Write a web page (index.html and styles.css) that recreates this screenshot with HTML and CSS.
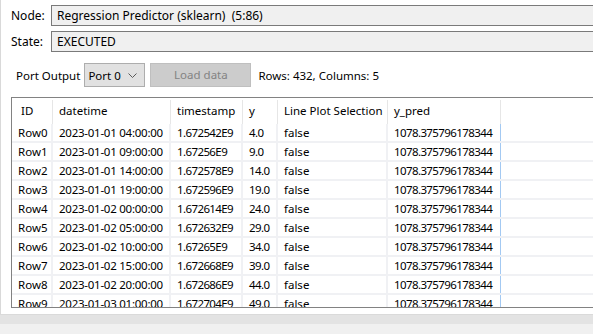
FILE: index.html
```html
<!DOCTYPE html>
<html>
<head>
<meta charset="utf-8">
<link rel="stylesheet" href="styles.css">
</head>
<body>
<div class="panel">
  <div class="field-row first">
    <span class="label">Node:</span>
    <div class="field">Regression Predictor (sklearn)&nbsp; (5:86)</div>
  </div>
  <div class="field-row">
    <span class="label">State:</span>
    <div class="field">EXECUTED</div>
  </div>
  <div class="port-row">
    <span class="port-label">Port Output</span>
    <div class="select">
      <span>Port 0</span>
      <svg class="chev" width="9" height="5" viewBox="0 0 9 5"><path d="M0.5 0.5 L4.5 4.5 L8.5 0.5" fill="none" stroke="#5a5a5a" stroke-width="1"/></svg>
    </div>
    <div class="btn">Load data</div>
    <span class="info">Rows: 432, Columns: 5</span>
  </div>
  <div class="table">
    <div class="row head">
      <div class="c id">ID</div>
      <div class="c">datetime</div>
      <div class="c">timestamp</div>
      <div class="c">y</div>
      <div class="c">Line Plot Selection</div>
      <div class="c">y_pred</div>
      <div class="c last"></div>
    </div>
    <div class="row"><div class="c id">Row0</div><div class="c dt">2023-01-01 04:00:00</div><div class="c n">1.672542E9</div><div class="c n">4.0</div><div class="c">false</div><div class="c n pred">1078.375796178344</div><div class="c last"></div></div>
    <div class="row"><div class="c id">Row1</div><div class="c dt">2023-01-01 09:00:00</div><div class="c n">1.67256E9</div><div class="c n">9.0</div><div class="c">false</div><div class="c n pred">1078.375796178344</div><div class="c last"></div></div>
    <div class="row"><div class="c id">Row2</div><div class="c dt">2023-01-01 14:00:00</div><div class="c n">1.672578E9</div><div class="c n">14.0</div><div class="c">false</div><div class="c n pred">1078.375796178344</div><div class="c last"></div></div>
    <div class="row"><div class="c id">Row3</div><div class="c dt">2023-01-01 19:00:00</div><div class="c n">1.672596E9</div><div class="c n">19.0</div><div class="c">false</div><div class="c n pred">1078.375796178344</div><div class="c last"></div></div>
    <div class="row"><div class="c id">Row4</div><div class="c dt">2023-01-02 00:00:00</div><div class="c n">1.672614E9</div><div class="c n">24.0</div><div class="c">false</div><div class="c n pred">1078.375796178344</div><div class="c last"></div></div>
    <div class="row"><div class="c id">Row5</div><div class="c dt">2023-01-02 05:00:00</div><div class="c n">1.672632E9</div><div class="c n">29.0</div><div class="c">false</div><div class="c n pred">1078.375796178344</div><div class="c last"></div></div>
    <div class="row"><div class="c id">Row6</div><div class="c dt">2023-01-02 10:00:00</div><div class="c n">1.67265E9</div><div class="c n">34.0</div><div class="c">false</div><div class="c n pred">1078.375796178344</div><div class="c last"></div></div>
    <div class="row"><div class="c id">Row7</div><div class="c dt">2023-01-02 15:00:00</div><div class="c n">1.672668E9</div><div class="c n">39.0</div><div class="c">false</div><div class="c n pred">1078.375796178344</div><div class="c last"></div></div>
    <div class="row"><div class="c id">Row8</div><div class="c dt">2023-01-02 20:00:00</div><div class="c n">1.672686E9</div><div class="c n">44.0</div><div class="c">false</div><div class="c n pred">1078.375796178344</div><div class="c last"></div></div>
    <div class="row"><div class="c id">Row9</div><div class="c dt">2023-01-03 01:00:00</div><div class="c n">1.672704E9</div><div class="c n">49.0</div><div class="c">false</div><div class="c n pred">1078.375796178344</div><div class="c last"></div></div>
  </div>
</div>
<div class="bottom-band"></div>
</body>
</html>
```
FILE: styles.css
```css
html, body {
  margin: 0;
  padding: 0;
}
body {
  background: #f0f0f0;
  font-family: "Noto Sans", "Open Sans", sans-serif;
  font-size: 12px;
  color: #000;
  width: 593px;
  height: 334px;
  overflow: hidden;
}
.panel {
  background: #ffffff;
  border-left: 1px solid #d9d9d9;
  border-bottom: 1px solid #dadada;
  height: 315px;
  overflow: hidden;
  box-sizing: border-box;
  padding-top: 5px;
}
.bottom-band {
  height: 9px;
  background: #e3e3e3;
}
.field-row {
  display: flex;
  align-items: center;
  height: 21px;
  margin-bottom: 5px;
  padding-left: 10px;
}
.label {
  width: 40px;
  line-height: 21px;
}
.field {
  flex: 1;
  height: 19px;
  line-height: 19px;
  background: #f0f0f0;
  border: 1px solid #7a7a7a;
  border-right: none;
  padding-left: 5px;
  white-space: nowrap;
}
.port-row {
  display: flex;
  align-items: center;
  height: 24px;
  margin-top: 11px;
  padding-left: 15px;
  font-size: 11.5px;
}
.port-label {
  margin-right: 4px;
}
.select {
  width: 56px;
  height: 22px;
  background: #e1e1e1;
  border: 1px solid #adadad;
  display: flex;
  align-items: center;
  padding-left: 3px;
  margin-right: 5px;
}
.select span {
  flex: 1;
}
.chev {
  margin-right: 7px;
}
.btn {
  width: 99px;
  height: 22px;
  line-height: 22px;
  background: #cccccc;
  border: 1px solid #bfbfbf;
  color: #838383;
  text-align: center;
  margin-right: 7px;
}
.table {
  margin-top: 10px;
  margin-left: 10px;
  border: 1px solid #828282;
  border-right: none;
  height: 209px;
  overflow: hidden;
  font-size: 11.5px;
}
.row {
  display: grid;
  grid-template-columns: 41px 118px 72px 35px 110px 113px 1fr;
  height: 17px;
  border-bottom: 2px solid #f0f1f4;
}
.row.head {
  height: 26px;
  border-bottom: none;
}
.c {
  padding-left: 6px;
  line-height: 17px;
  white-space: nowrap;
  overflow: hidden;
  border-right: 2px solid #f0f1f4;
  box-sizing: border-box;
}
.c.n {
  letter-spacing: -0.6px;
}
.c.dt {
  letter-spacing: -0.25px;
}
.head .c {
  border-right: 1px solid #e6e6e6;
  height: 24px;
  margin-top: 2px;
  line-height: 22px;
}
.head .c.last, .c.last {
  border-right: none;
}
.head .c.id {
  padding-left: 9px;
}
.c.pred {
  border-right: 1px solid #a3c9f2;
}
```
